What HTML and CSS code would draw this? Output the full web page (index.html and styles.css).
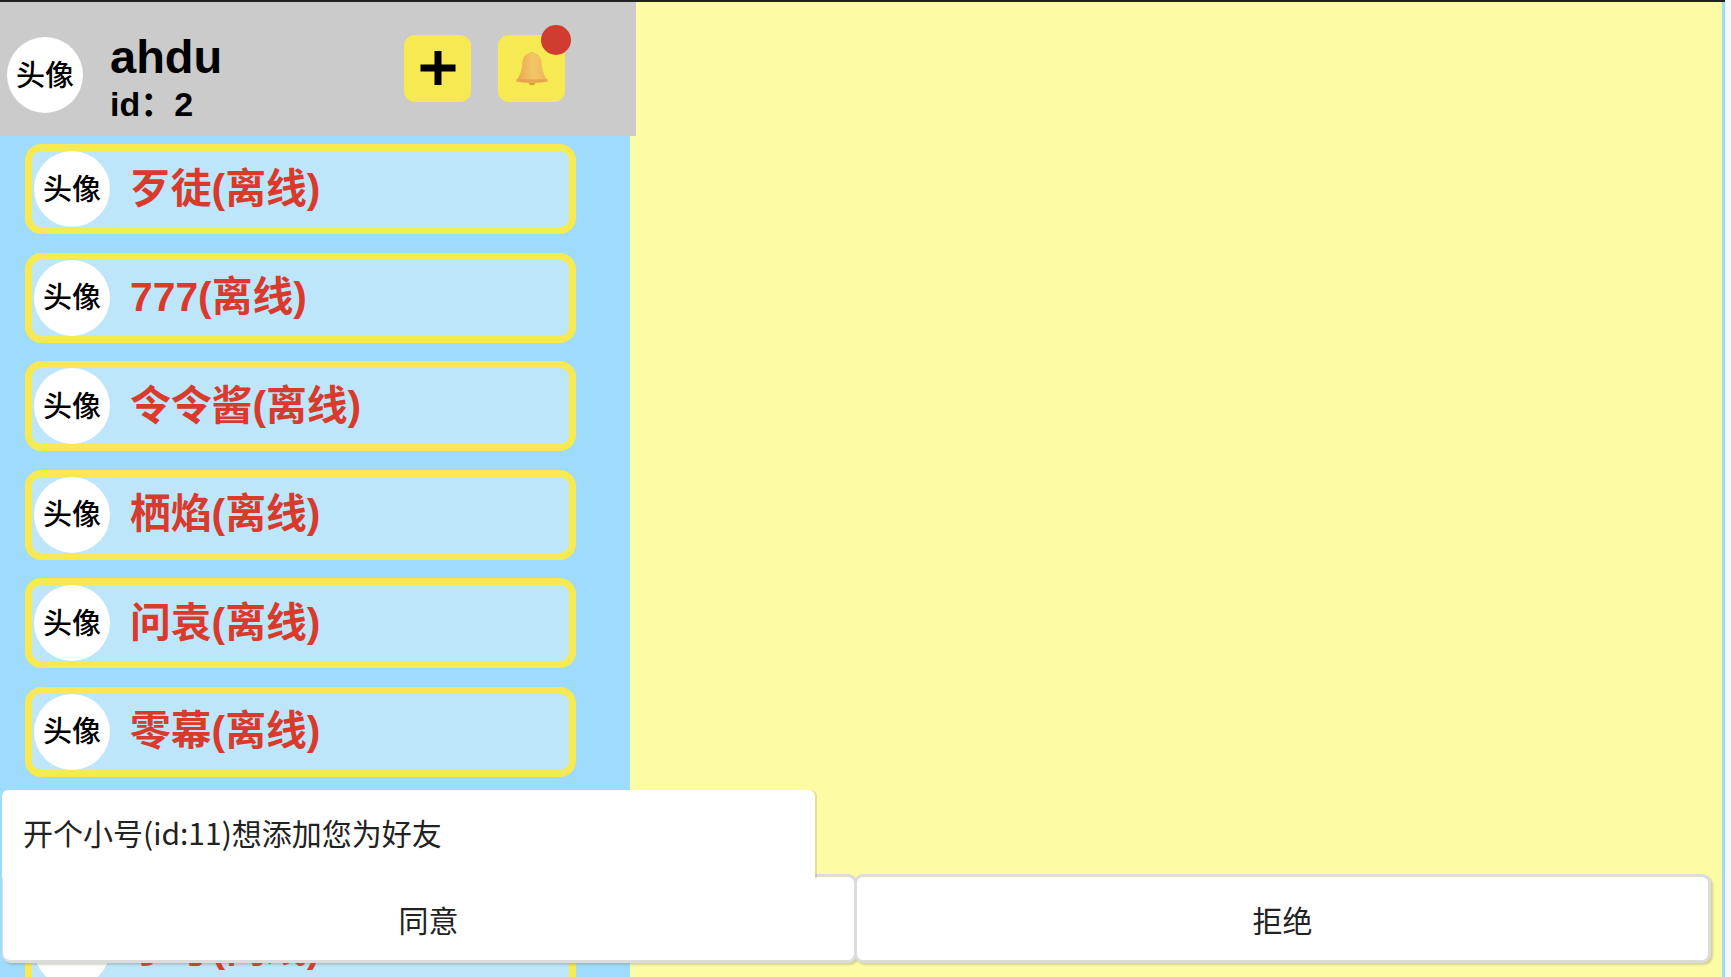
FILE: index.html
```html
<!DOCTYPE html>
<html lang="zh-CN">
<head>
  <meta charset="UTF-8">
  <title>好友列表</title>
  <link rel="stylesheet" href="styles.css">
</head>
<body>
  <div class="app">
    <div class="side">
      <div class="user-bar">
        <div class="avatar">头像</div>
        <div class="user-info">
          <div class="user-name">ahdu</div>
          <div class="user-id">id：2</div>
        </div>
        <button class="tool-btn add-btn">
          <svg width="36" height="36" viewBox="0 0 36 36"><path d="M18 1v34M0.500 18h35" stroke="#000" stroke-width="7" fill="none"/></svg>
        </button>
        <button class="tool-btn bell-btn">
          <svg width="34" height="37" viewBox="0 0 36 40">
            <defs>
              <linearGradient id="bell" x1="0" x2="1" y1="0" y2="0">
                <stop offset="0" stop-color="#e9a94f"/>
                <stop offset="0.55" stop-color="#f3c667"/>
                <stop offset="1" stop-color="#eeb45a"/>
              </linearGradient>
            </defs>
            <circle cx="18" cy="4" r="2.2" fill="#e9b05a"/>
            <path d="M18 3c-7 0-10 5-10.500 12-.4 7-2.500 12-5.500 16.500 0 2 32 2 32 0-3-4.500-5.100-9.500-5.500-16.500C28 8 25 3 18 3z" fill="url(#bell)"/>
            <path d="M1 31.500h34v2.500c-6 2-28 2-34 0z" fill="#e6a64e"/>
            <path d="M14 35.500c1 3.500 7 3.500 8 0z" fill="#dd9a45"/>
          </svg>
          <span class="dot"></span>
        </button>
      </div>
      <div class="friend-list">
        <div class="friend"><div class="avatar">头像</div><span class="friend-name">歹徒(离线)</span></div>
        <div class="friend"><div class="avatar">头像</div><span class="friend-name">777(离线)</span></div>
        <div class="friend"><div class="avatar">头像</div><span class="friend-name">令令酱(离线)</span></div>
        <div class="friend"><div class="avatar">头像</div><span class="friend-name">栖焰(离线)</span></div>
        <div class="friend"><div class="avatar">头像</div><span class="friend-name">问袁(离线)</span></div>
        <div class="friend"><div class="avatar">头像</div><span class="friend-name">零幕(离线)</span></div>
        <div class="friend"></div>
        <div class="friend"><div class="avatar">头像</div><span class="friend-name">小号(离线)</span></div>
      </div>
    </div>
    <div class="chat"></div>
    <div class="edge"></div>
  </div>

  <div class="request">
    <div class="request-msg">开个小号(id:11)想添加您为好友</div>
    <div class="request-btns">
      <button class="request-btn">同意</button>
      <button class="request-btn">拒绝</button>
    </div>
  </div>
</body>
</html>
```

FILE: styles.css
```css
html, body {
  margin: 0;
  height: 100%;
  overflow: hidden;
  background: #f8f8f8;
  font-family: "Liberation Sans", "Noto Sans CJK SC", sans-serif;
}
.app {
  display: flex;
  width: 1725px;
  height: 977px;
  border-top: 2px solid #222;
  box-sizing: border-box;
}
.side {
  width: 630px;
  flex-shrink: 0;
  background: #9fdbfc;
}
.user-bar {
  width: 636px;
  height: 134px;
  box-sizing: border-box;
  background: #cbcbcb;
  display: flex;
  align-items: center;
  padding: 11px 0 0 7px;
  position: relative;
  z-index: 1;
}
.avatar {
  width: 76px;
  height: 76px;
  box-sizing: border-box;
  padding-bottom: 5px;
  border-radius: 50%;
  background: #fff;
  color: #000;
  font-size: 29px;
  font-weight: 500;
  display: flex;
  align-items: center;
  justify-content: center;
  flex-shrink: 0;
}
.user-bar .avatar {
  padding-bottom: 3px;
}
.user-info {
  margin-left: 27px;
  width: 294px;
  margin-top: 5px;
  font-weight: bold;
  color: #000;
}
.user-name {
  font-size: 47px;
  line-height: 52px;
}
.user-id {
  font-size: 34px;
  line-height: 40px;
  margin-top: 1px;
}
.tool-btn {
  width: 67px;
  height: 67px;
  padding: 0;
  border: none;
  border-radius: 11px;
  background: #f6e952;
  display: flex;
  align-items: center;
  justify-content: center;
  margin-top: -13px;
  position: relative;
}
.add-btn {
  margin-right: 27px;
}
.dot {
  position: absolute;
  top: -10px;
  right: -6px;
  width: 30px;
  height: 30px;
  border-radius: 50%;
  background: #d03c2d;
}
.friend-list {
  display: flex;
  flex-direction: column;
  gap: 18.500px;
  padding: 8px 0 0 25px;
}
.friend {
  width: 551px;
  height: 90px;
  box-sizing: border-box;
  border: 7px solid #f6e952;
  border-radius: 16px;
  background: #bde6fb;
  display: flex;
  align-items: center;
  padding-left: 2px;
  flex-shrink: 0;
}
.friend-name {
  margin-left: 20px;
  margin-top: -8px;
  font-size: 40.800px;
  font-weight: bold;
  color: #d93a2b;
}
.chat {
  flex: 1;
  background: #fdfca5;
}
.edge {
  width: 3px;
  background: #9fdbfc;
}
.request {
  position: absolute;
  left: 2px;
  top: 790px;
  width: 1709px;
  color: #222;
  font-size: 30px;
  font-family: "Noto Sans CJK SC", "Liberation Sans", sans-serif;
}
.request-msg {
  width: 813px;
  height: 88px;
  box-sizing: border-box;
  padding: 17px 0 0 21px;
  background: #fff;
  border-radius: 6px 6px 0 0;
  line-height: 50px;
  box-shadow: 2px 0 0 rgba(0,0,0,0.1);
  position: relative;
  z-index: 1;
}
.request-btns {
  display: flex;
  height: 89px;
  margin-top: -4px;
}
.request-btn {
  flex: 1;
  padding: 0;
  background: #fff;
  border: 3px solid #dcdcdc;
  border-radius: 9px;
  box-shadow: 2px 2px 2px rgba(120,120,90,0.3);
  font: inherit;
  color: #222;
  margin-left: -3px;
}
.request-btn:first-child {
  margin-left: 0;
  border-left-width: 1px;
  border-top-left-radius: 0;
}
```
